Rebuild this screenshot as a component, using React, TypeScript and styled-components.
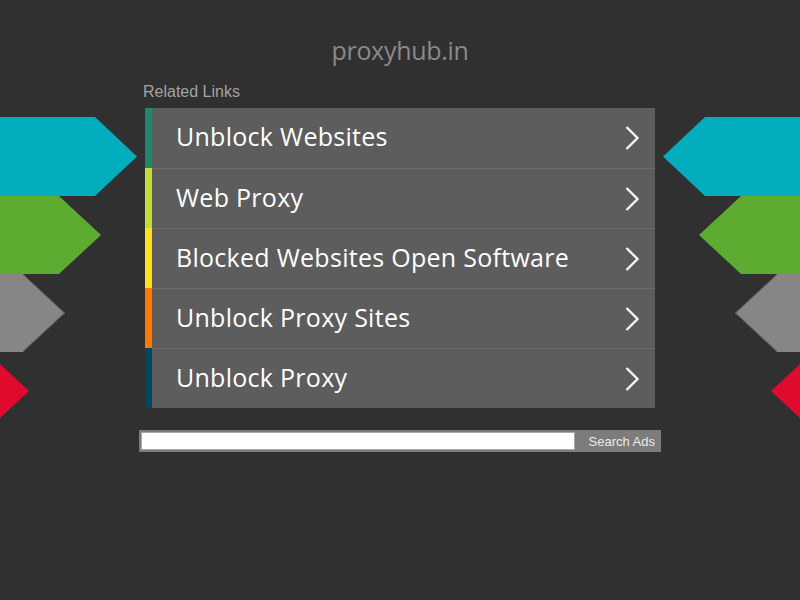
import React from "react";
import styled, { createGlobalStyle } from "styled-components";

const GlobalStyle = createGlobalStyle`
  html, body { margin: 0; padding: 0; background: #303030; }
  body { overflow: hidden; }
`;

const Page = styled.div`
  width: 800px;
  min-height: 600px;
  overflow: hidden;
  background: #303030;
`;

const Title = styled.h1`
  margin: 0;
  padding: 34px 0 17px;
  height: 32px;
  line-height: 32px;
  text-align: center;
  font-family: "Open Sans", "DejaVu Sans", sans-serif;
  font-weight: 500;
  font-size: 25px;
  color: #8a8a8a;
  letter-spacing: -0.3px;
`;

const Main = styled.div`
  display: grid;
  grid-template-columns: 145px 510px 145px;
`;

const DecoColumn = styled.div<{ $side: "left" | "right" }>`
  display: flex;
  flex-direction: column;
  align-items: ${(p) => (p.$side === "left" ? "flex-start" : "flex-end")};
  padding-top: 34px;
`;

const ShapeSvg = styled.svg<{ $shift: number; $side: "left" | "right" }>`
  display: block;
  flex: none;
  ${(p) => (p.$side === "left" ? `margin-left: ${-p.$shift}px;` : `margin-right: ${-p.$shift}px;`)}
`;

const Center = styled.div`
  display: flex;
  flex-direction: column;
`;

const RelatedLabel = styled.div`
  font-family: "Liberation Sans", Arial, sans-serif;
  font-size: 16px;
  line-height: 18px;
  color: #a3a3a3;
  margin: 0 0 7px -2px;
`;

const List = styled.div`
  display: flex;
  flex-direction: column;
`;

const Row = styled.a`
  display: flex;
  height: 60px;
  text-decoration: none;
  cursor: pointer;
`;

const ColorBar = styled.span<{ $color: string }>`
  width: 7px;
  flex: none;
  background: ${(p) => p.$color};
`;

const RowBody = styled.span<{ $first: boolean }>`
  flex: 1;
  display: flex;
  align-items: center;
  justify-content: space-between;
  background: #5d5d5d;
  border-top: ${(p) => (p.$first ? "none" : "1px solid #6c6c6c")};
  padding: 0 16px 0 24px;
`;

const RowText = styled.span`
  font-family: "Open Sans", "Noto Sans", sans-serif;
  font-size: 25px;
  font-weight: 400;
  color: #ffffff;
  letter-spacing: 0.28px;
  padding-bottom: 4px;
`;

const Chevron = styled.svg`
  display: block;
  flex: none;
`;

const SearchForm = styled.form`
  display: flex;
  margin: 22px -6px 0 -6px;
  height: 22px;
  box-sizing: border-box;
  padding: 2px 0 2px 2px;
  background: #7c7c7c;
`;

const SearchInput = styled.input`
  flex: 1;
  margin: 0;
  box-sizing: border-box;
  height: 18px;
  border: 1px solid #a8a8a8;
  background: #ffffff;
  outline: none;
`;

const SearchButton = styled.button`
  flex: none;
  width: 86px;
  border: none;
  background: transparent;
  color: #eaeaea;
  font-family: "Liberation Sans", Arial, sans-serif;
  font-size: 13px;
  padding: 0 6px 0 0;
  text-align: right;
  cursor: pointer;
`;

type Shape = { w: number; h: number; shift: number; color: string; stroke?: string };

const shapes: Shape[] = [
  { w: 137, h: 79, shift: 0, color: "#02adbe" },
  { w: 101, h: 78, shift: 0, color: "#5dab30" },
  { w: 65, h: 78, shift: 0, color: "#868686", stroke: "#555555" },
  { w: 42, h: 78, shift: 13, color: "#e00b2c" },
];

const TIP = 42;

function Arrow({ s, side }: { s: Shape; side: "left" | "right" }) {
  const { w, h } = s;
  const pts =
    side === "left"
      ? `0,0 ${w - TIP},0 ${w},${h / 2} ${w - TIP},${h} 0,${h}`
      : `${w},0 ${TIP},0 0,${h / 2} ${TIP},${h} ${w},${h}`;
  return (
    <ShapeSvg width={w} height={h} viewBox={`0 0 ${w} ${h}`} $shift={s.shift} $side={side}>
      <polygon points={pts} fill={s.color} />
      {s.stroke && (
        <polyline
          points={
            side === "left"
              ? `${w - TIP},0.5 ${w - 0.5},${h / 2} ${w - TIP},${h - 0.5}`
              : `${TIP},0.5 0.5,${h / 2} ${TIP},${h - 0.5}`
          }
          fill="none"
          stroke={s.stroke}
          strokeWidth={1}
        />
      )}
    </ShapeSvg>
  );
}

const links = [
  { text: "Unblock Websites", color: "#1d8a70" },
  { text: "Web Proxy", color: "#c3dc33" },
  { text: "Blocked Websites Open Software", color: "#ffe01b" },
  { text: "Unblock Proxy Sites", color: "#ff7800" },
  { text: "Unblock Proxy", color: "#03475a" },
];

export default function App() {
  return (
    <Page>
      <GlobalStyle />
      <Title>proxyhub.in</Title>
      <Main>
        <DecoColumn $side="left">
          {shapes.map((s, i) => (
            <Arrow key={i} s={s} side="left" />
          ))}
        </DecoColumn>
        <Center>
          <RelatedLabel>Related Links</RelatedLabel>
          <List>
            {links.map((l, i) => (
              <Row key={l.text}>
                <ColorBar $color={l.color} />
                <RowBody $first={i === 0}>
                  <RowText>{l.text}</RowText>
                  <Chevron width="14" height="24" viewBox="0 0 14 24">
                    <polyline
                      points="1.5,1 12.5,12 1.5,23"
                      fill="none"
                      stroke="#f2f2f2"
                      strokeWidth="2.4"
                    />
                  </Chevron>
                </RowBody>
              </Row>
            ))}
          </List>
          <SearchForm onSubmit={(e) => e.preventDefault()}>
            <SearchInput type="text" />
            <SearchButton type="submit">Search Ads</SearchButton>
          </SearchForm>
        </Center>
        <DecoColumn $side="right">
          {shapes.map((s, i) => (
            <Arrow key={i} s={s} side="right" />
          ))}
        </DecoColumn>
      </Main>
    </Page>
  );
}
